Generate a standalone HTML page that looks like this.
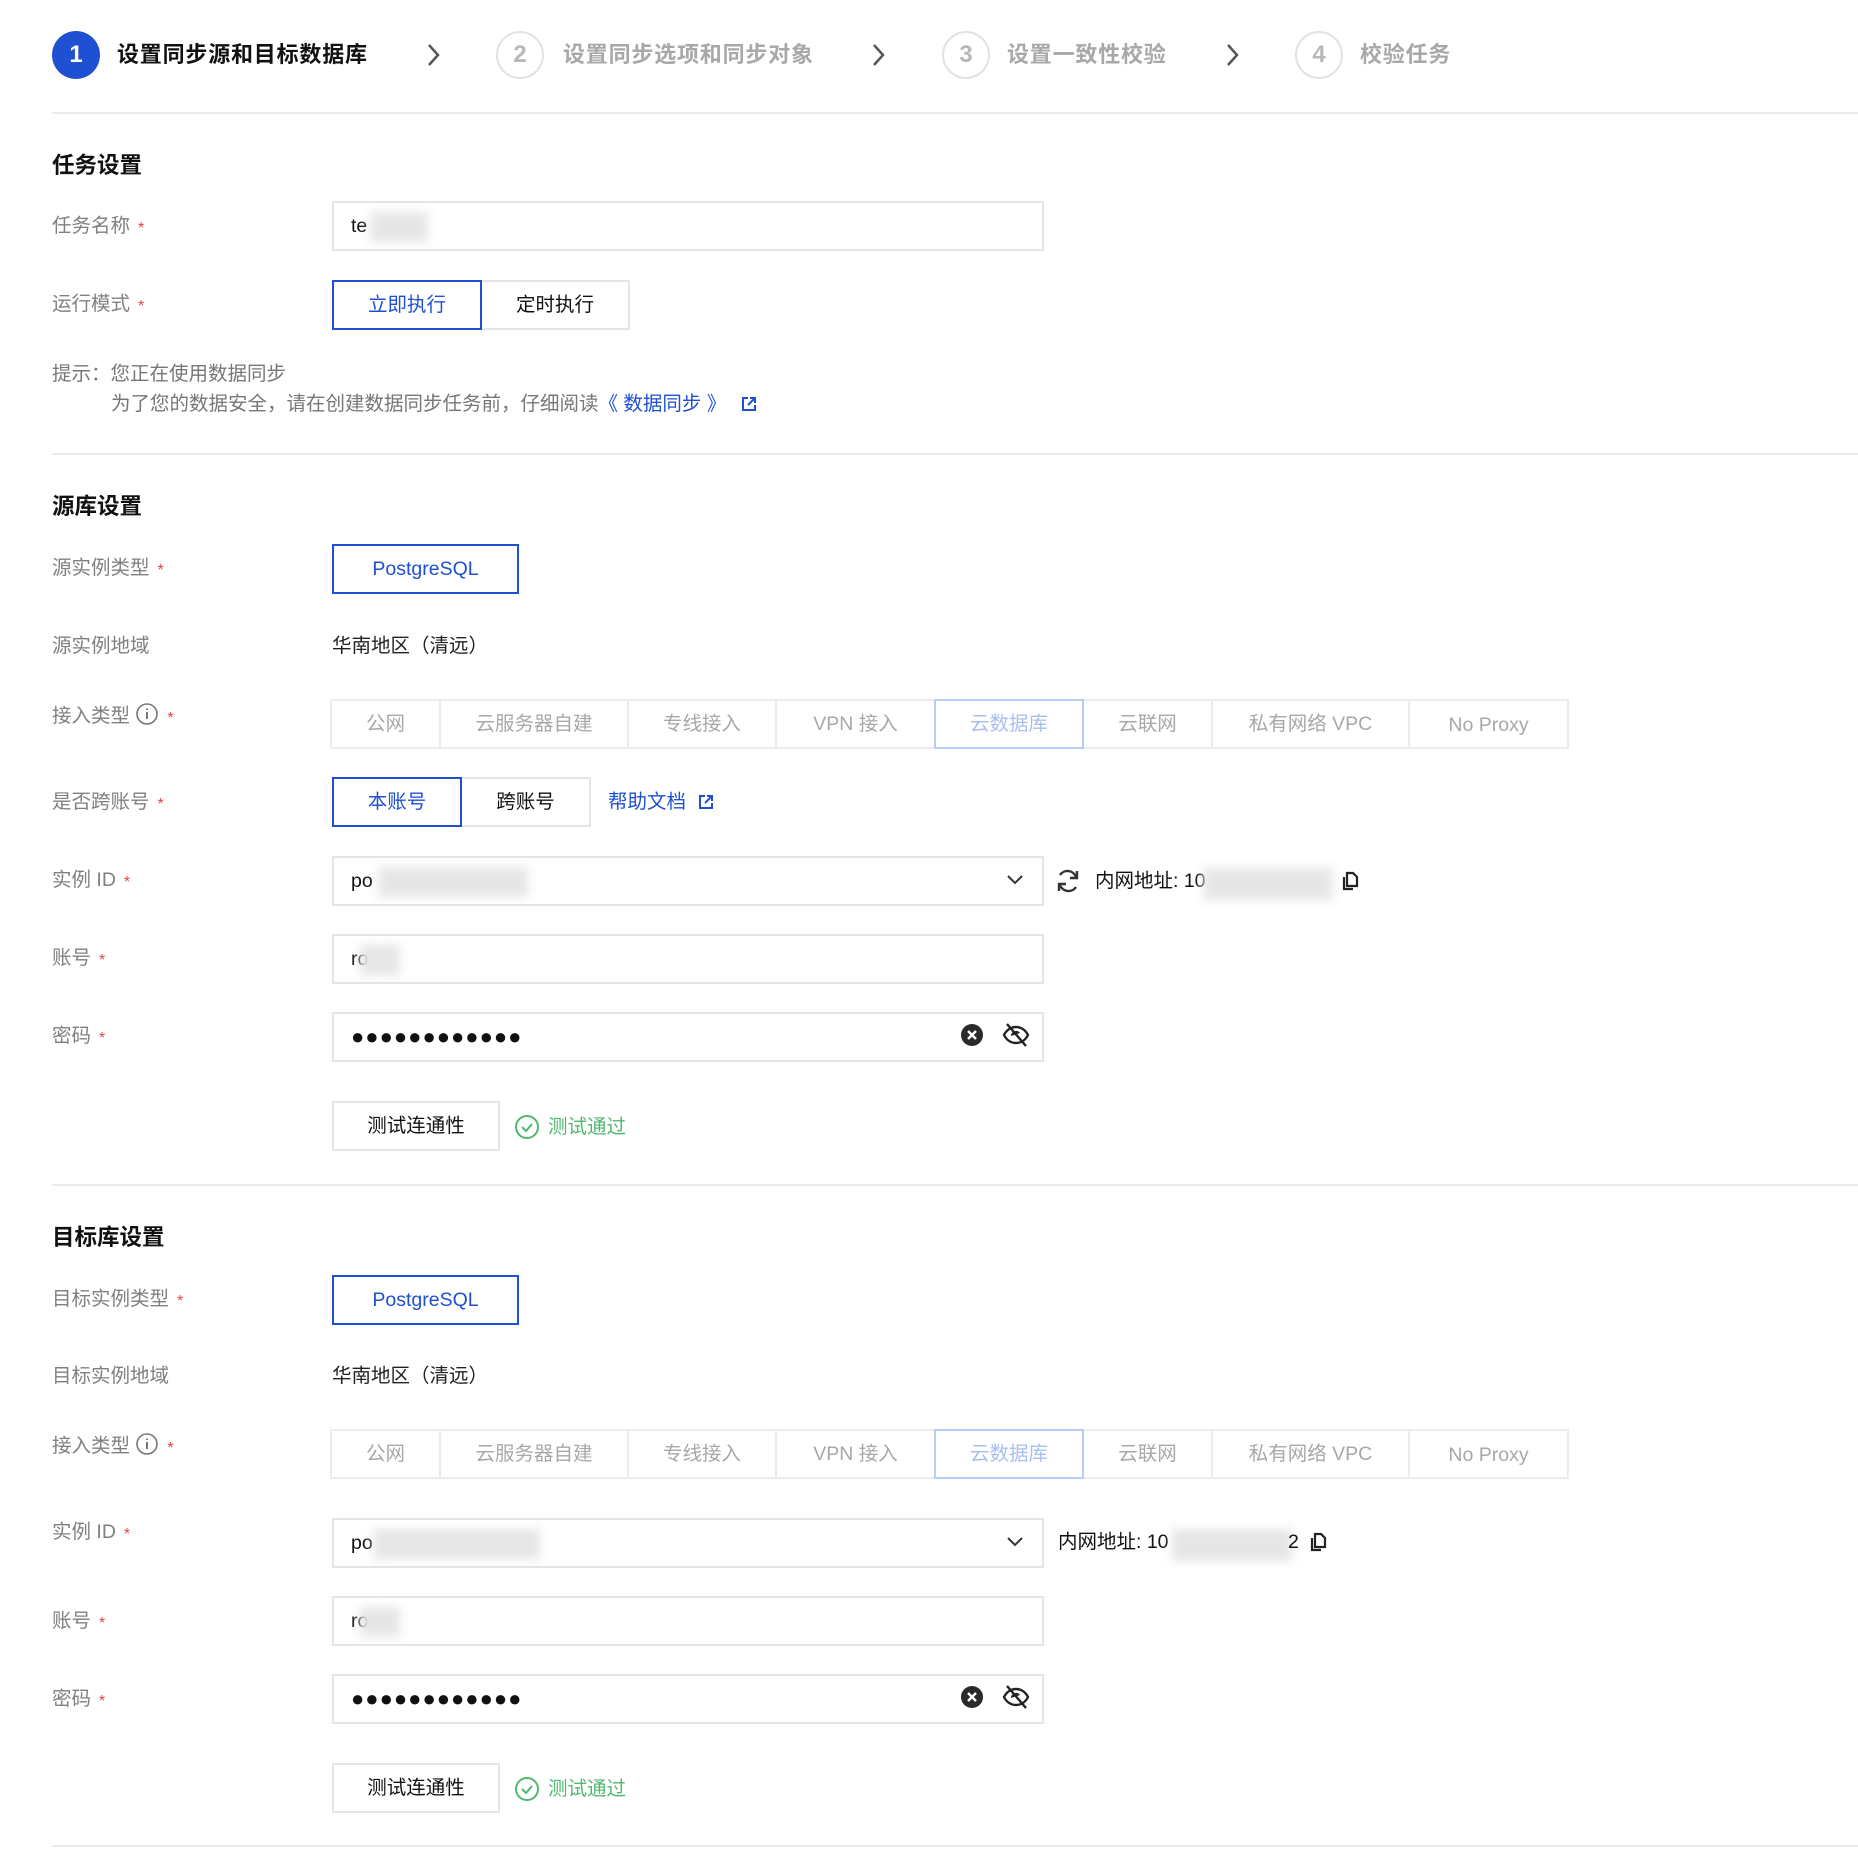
<!DOCTYPE html>
<html><head><meta charset="utf-8"><style>
*{margin:0;padding:0;box-sizing:border-box}
body{width:1858px;height:1850px;background:#fff;position:relative;overflow:hidden;font-family:"Liberation Sans","Noto Sans CJK SC",sans-serif;color:#222}
.a{position:absolute;white-space:nowrap}
.lab{font-size:19.5px;color:#808080;line-height:24px}
.lab i{font-style:normal;color:#e54545;font-size:16px;margin-left:8px;vertical-align:-1px}
.h{font-size:22.5px;font-weight:bold;color:#111;line-height:28px}
.box{position:absolute;border:2px solid #e4e4ea;background:#fff}
.inp{font-size:19.5px;line-height:46px;padding-left:17px;color:#111}
.btn{position:absolute;border:2px solid #e4e4ea;font-size:19.5px;text-align:center;color:#111;display:flex;align-items:center;justify-content:center;line-height:24px}
.sel{border-color:#1f50d3;color:#1f50d3;z-index:2}
.seg{position:absolute;top:0;height:50px;border:2px solid #ececf0;margin-left:-2px;font-size:19.5px;color:#a8a8a8;text-align:center;line-height:46px}
.seg.on{border-color:#b8cdf5;color:#a9bff0;z-index:2}
.np{line-height:48px}
.blur{position:absolute;background:#e6e6e6;filter:blur(5px)}
.dv{position:absolute;left:52px;right:0;height:2px;background:#ebebef}
.step{position:absolute;width:48px;height:48px;border-radius:50%;font-size:24px;display:flex;align-items:center;justify-content:center;font-weight:bold}
.st{font-size:22px;line-height:28px;letter-spacing:.8px}
.blue{color:#1f50d3}
</style></head><body>

<div class="step" style="left:52px;top:31px;background:#1f50d3;color:#fff">1</div>
<div class="a st" style="left:117px;top:41px;font-weight:bold;color:#111">设置同步源和目标数据库</div>
<svg class="a" style="left:425px;top:42px" width="18" height="26"><path d="M4 3l9 10-9 10" fill="none" stroke="#555" stroke-width="2.5"/></svg>
<div class="step" style="left:496px;top:31px;border:2px solid #e2e2e6;color:#b8b8b8">2</div>
<div class="a st" style="left:563px;top:41px;color:#a8a8a8;font-weight:bold">设置同步选项和同步对象</div>
<svg class="a" style="left:870px;top:42px" width="18" height="26"><path d="M4 3l9 10-9 10" fill="none" stroke="#555" stroke-width="2.5"/></svg>
<div class="step" style="left:942px;top:31px;border:2px solid #e2e2e6;color:#b8b8b8">3</div>
<div class="a st" style="left:1007px;top:41px;color:#a8a8a8;font-weight:bold">设置一致性校验</div>
<svg class="a" style="left:1224px;top:42px" width="18" height="26"><path d="M4 3l9 10-9 10" fill="none" stroke="#555" stroke-width="2.5"/></svg>
<div class="step" style="left:1295px;top:31px;border:2px solid #e2e2e6;color:#b8b8b8">4</div>
<div class="a st" style="left:1360px;top:41px;color:#a8a8a8;font-weight:bold">校验任务</div>
<div class="dv" style="top:112px"></div>

<div class="a h" style="left:52px;top:152px">任务设置</div>
<div class="a lab" style="left:52px;top:214px">任务名称<i>*</i></div>
<div class="box inp" style="left:332px;top:201px;width:712px;height:50px">te</div>
<div class="blur" style="left:370px;top:212px;width:58px;height:30px"></div>
<div class="a lab" style="left:52px;top:292px">运行模式<i>*</i></div>
<div class="btn sel" style="left:332px;top:280px;width:150px;height:50px">立即执行</div>
<div class="btn" style="left:480px;top:280px;width:150px;height:50px">定时执行</div>
<div class="a lab" style="left:52px;top:362px;color:#777">提示：您正在使用数据同步</div>
<div class="a lab" style="left:111px;top:392px;color:#777">为了您的数据安全，请在创建数据同步任务前，仔细阅读<span class="blue">《 数据同步 》</span></div>
<svg class="a" style="left:741px;top:396px" width="16" height="16"><path d="M7 2H2v12h12V9M9 2h5v5M14 2L7 9" fill="none" stroke="#1f50d3" stroke-width="2"/></svg>
<div class="dv" style="top:453px"></div>

<div class="a h" style="left:52px;top:493px">源库设置</div>
<div class="a lab" style="left:52px;top:556px">源实例类型<i>*</i></div>
<div class="btn sel" style="left:332px;top:544px;width:187px;height:50px">PostgreSQL</div>
<div class="a lab" style="left:52px;top:634px">源实例地域</div>
<div class="a" style="left:332px;top:634px;font-size:19.5px;line-height:24px">华南地区（清远）</div>

<div class="a lab" style="left:52px;top:702px">接入类型 <svg width="24" height="24" style="vertical-align:-4px"><circle cx="12" cy="12" r="10" fill="none" stroke="#777" stroke-width="1.6"/><path d="M12 10v7M12 6.5v1.5" stroke="#777" stroke-width="2"/></svg><i>*</i></div>
<div class="a" style="left:332px;top:699px;width:1240px;height:50px">
<div class="seg" style="left:0;width:111px">公网</div>
<div class="seg" style="left:109px;width:190px">云服务器自建</div>
<div class="seg" style="left:297px;width:150px">专线接入</div>
<div class="seg" style="left:445px;width:161px">VPN 接入</div>
<div class="seg on" style="left:604px;width:150px">云数据库</div>
<div class="seg" style="left:752px;width:131px">云联网</div>
<div class="seg" style="left:881px;width:199px">私有网络 VPC</div>
<div class="seg np" style="left:1078px;width:161px">No Proxy</div>
</div>

<div class="a lab" style="left:52px;top:790px">是否跨账号<i>*</i></div>
<div class="btn sel" style="left:332px;top:777px;width:130px;height:50px">本账号</div>
<div class="btn" style="left:460px;top:777px;width:131px;height:50px">跨账号</div>
<div class="a blue" style="left:608px;top:790px;font-size:19.5px;line-height:24px">帮助文档</div>
<svg class="a" style="left:698px;top:794px" width="16" height="16"><path d="M7 2H2v12h12V9M9 2h5v5M14 2L7 9" fill="none" stroke="#1f50d3" stroke-width="2"/></svg>

<div class="a lab" style="left:52px;top:868px">实例 ID<i>*</i></div>
<div class="box inp" style="left:332px;top:856px;width:712px;height:50px">po</div>
<div class="blur" style="left:378px;top:867px;width:150px;height:30px"></div>
<svg class="a" style="left:1006px;top:873px" width="18" height="14"><path d="M2 3l7 7 7-7" fill="none" stroke="#333" stroke-width="2"/></svg>
<svg class="a" style="left:1055px;top:868px" width="26" height="26"><path d="M21 9A9 9 0 0 0 5 7M5 17a9 9 0 0 0 16 2" fill="none" stroke="#333" stroke-width="2.4"/><path d="M22 3v7h-7M4 23v-7h7" fill="none" stroke="#333" stroke-width="2.4"/></svg>
<div class="a" style="left:1095px;top:868px;font-size:19.5px;line-height:26px;color:#111">内网地址: 10</div>
<div class="blur" style="left:1203px;top:868px;width:130px;height:32px"></div>
<svg class="a" style="left:1341px;top:871px" width="18" height="20"><path d="M6 2h6l4 4v9H6z M3 6v12h9" fill="none" stroke="#222" stroke-width="2.2"/></svg>

<div class="a lab" style="left:52px;top:946px">账号<i>*</i></div>
<div class="box inp" style="left:332px;top:934px;width:712px;height:50px">ro</div>
<div class="blur" style="left:360px;top:945px;width:40px;height:30px"></div>

<div class="a lab" style="left:52px;top:1024px">密码<i>*</i></div>
<div class="box inp" style="left:332px;top:1012px;width:712px;height:50px;font-size:22px;letter-spacing:1px">●●●●●●●●●●●●</div>
<svg class="a" style="left:960px;top:1023px" width="24" height="24"><circle cx="12" cy="12" r="11" fill="#2a2a2a"/><path d="M8 8l8 8M16 8l-8 8" stroke="#fff" stroke-width="2.4"/></svg>
<svg class="a" style="left:1002px;top:1022px" width="28" height="26"><path d="M2 13c3-6 8-8 12-8s9 2 12 8c-3 6-8 8-12 8S5 19 2 13z" fill="none" stroke="#222" stroke-width="2.4"/><path d="M9 14a5 5 0 0 1 9-3z" fill="#222"/><path d="M5 2l19 22" stroke="#222" stroke-width="2.4"/></svg>

<div class="btn" style="left:332px;top:1101px;width:168px;height:50px">测试连通性</div>
<svg class="a" style="left:514px;top:1114px" width="26" height="26"><circle cx="13" cy="13" r="11" fill="none" stroke="#4fb86e" stroke-width="2"/><path d="M8 13l4 4 6-7" fill="none" stroke="#4fb86e" stroke-width="2"/></svg>
<div class="a" style="left:548px;top:1115px;font-size:19.5px;line-height:24px;color:#4fb86e">测试通过</div>
<div class="dv" style="top:1184px"></div>

<div class="a h" style="left:52px;top:1224px">目标库设置</div>
<div class="a lab" style="left:52px;top:1287px">目标实例类型<i>*</i></div>
<div class="btn sel" style="left:332px;top:1275px;width:187px;height:50px">PostgreSQL</div>
<div class="a lab" style="left:52px;top:1364px">目标实例地域</div>
<div class="a" style="left:332px;top:1364px;font-size:19.5px;line-height:24px">华南地区（清远）</div>

<div class="a lab" style="left:52px;top:1432px">接入类型 <svg width="24" height="24" style="vertical-align:-4px"><circle cx="12" cy="12" r="10" fill="none" stroke="#777" stroke-width="1.6"/><path d="M12 10v7M12 6.5v1.5" stroke="#777" stroke-width="2"/></svg><i>*</i></div>
<div class="a" style="left:332px;top:1429px;width:1240px;height:50px">
<div class="seg" style="left:0;width:111px">公网</div>
<div class="seg" style="left:109px;width:190px">云服务器自建</div>
<div class="seg" style="left:297px;width:150px">专线接入</div>
<div class="seg" style="left:445px;width:161px">VPN 接入</div>
<div class="seg on" style="left:604px;width:150px">云数据库</div>
<div class="seg" style="left:752px;width:131px">云联网</div>
<div class="seg" style="left:881px;width:199px">私有网络 VPC</div>
<div class="seg np" style="left:1078px;width:161px">No Proxy</div>
</div>

<div class="a lab" style="left:52px;top:1520px">实例 ID<i>*</i></div>
<div class="box inp" style="left:332px;top:1518px;width:712px;height:50px">po</div>
<div class="blur" style="left:374px;top:1529px;width:166px;height:30px"></div>
<svg class="a" style="left:1006px;top:1535px" width="18" height="14"><path d="M2 3l7 7 7-7" fill="none" stroke="#333" stroke-width="2"/></svg>
<div class="a" style="left:1058px;top:1529px;font-size:19.5px;line-height:26px;color:#111">内网地址: 10</div>
<div class="blur" style="left:1172px;top:1529px;width:120px;height:32px"></div>
<div class="a" style="left:1288px;top:1529px;font-size:19.5px;line-height:26px;color:#111">2</div>
<svg class="a" style="left:1309px;top:1532px" width="18" height="20"><path d="M6 2h6l4 4v9H6z M3 6v12h9" fill="none" stroke="#222" stroke-width="2.2"/></svg>

<div class="a lab" style="left:52px;top:1609px">账号<i>*</i></div>
<div class="box inp" style="left:332px;top:1596px;width:712px;height:50px">ro</div>
<div class="blur" style="left:360px;top:1607px;width:40px;height:30px"></div>

<div class="a lab" style="left:52px;top:1687px">密码<i>*</i></div>
<div class="box inp" style="left:332px;top:1674px;width:712px;height:50px;font-size:22px;letter-spacing:1px">●●●●●●●●●●●●</div>
<svg class="a" style="left:960px;top:1685px" width="24" height="24"><circle cx="12" cy="12" r="11" fill="#2a2a2a"/><path d="M8 8l8 8M16 8l-8 8" stroke="#fff" stroke-width="2.4"/></svg>
<svg class="a" style="left:1002px;top:1684px" width="28" height="26"><path d="M2 13c3-6 8-8 12-8s9 2 12 8c-3 6-8 8-12 8S5 19 2 13z" fill="none" stroke="#222" stroke-width="2.4"/><path d="M9 14a5 5 0 0 1 9-3z" fill="#222"/><path d="M5 2l19 22" stroke="#222" stroke-width="2.4"/></svg>

<div class="btn" style="left:332px;top:1763px;width:168px;height:50px">测试连通性</div>
<svg class="a" style="left:514px;top:1776px" width="26" height="26"><circle cx="13" cy="13" r="11" fill="none" stroke="#4fb86e" stroke-width="2"/><path d="M8 13l4 4 6-7" fill="none" stroke="#4fb86e" stroke-width="2"/></svg>
<div class="a" style="left:548px;top:1777px;font-size:19.5px;line-height:24px;color:#4fb86e">测试通过</div>
<div class="dv" style="top:1845px"></div>
</body></html>
